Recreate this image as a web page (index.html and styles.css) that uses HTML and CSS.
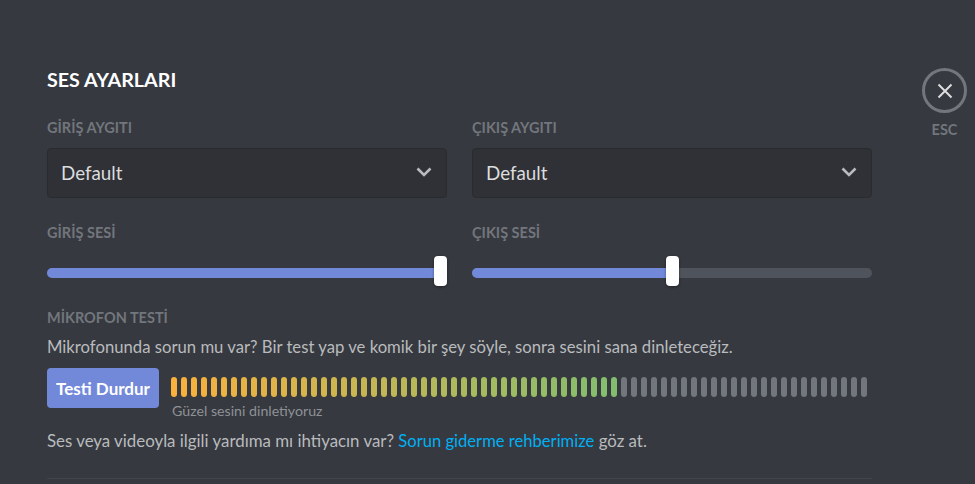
FILE: index.html
```html
<!DOCTYPE html>
<html lang="en">
<head>
    <meta charset="UTF-8">
    <meta name="viewport" content="width=device-width, initial-scale=1.0">
    <title>Ses Ayarları</title>
    <link rel="stylesheet" href="styles.css">
</head>
<body>

    <div class="page">
        <div class="settings">
            <h2 class="title">SES AYARLARI</h2>

            <div class="columns columns-devices">
                <div class="column">
                    <h5 class="label">GİRİŞ AYGITI</h5>
                    <div class="select">
                        <span>Default</span>
                        <svg class="chevron" width="18" height="18" viewBox="0 0 18 18"><path d="M2.5 5.5 L9 12 L15.5 5.5" fill="none" stroke="currentColor" stroke-width="2.6"/></svg>
                    </div>
                </div>
                <div class="column">
                    <h5 class="label">ÇIKIŞ AYGITI</h5>
                    <div class="select">
                        <span>Default</span>
                        <svg class="chevron" width="18" height="18" viewBox="0 0 18 18"><path d="M2.5 5.5 L9 12 L15.5 5.5" fill="none" stroke="currentColor" stroke-width="2.6"/></svg>
                    </div>
                </div>
            </div>

            <div class="columns columns-volume">
                <div class="column">
                    <h5 class="label">GİRİŞ SESİ</h5>
                    <div class="slider">
                        <div class="slider-fill" style="width: 98.25%"></div>
                        <div class="slider-grab" style="left: 98.25%"></div>
                    </div>
                </div>
                <div class="column">
                    <h5 class="label">ÇIKIŞ SESİ</h5>
                    <div class="slider">
                        <div class="slider-fill" style="width: 50%"></div>
                        <div class="slider-grab" style="left: 50%"></div>
                    </div>
                </div>
            </div>

            <h5 class="label label-test">MİKROFON TESTİ</h5>
            <p class="text">Mikrofonunda sorun mu var? Bir test yap ve komik bir şey söyle, sonra sesini sana dinleteceğiz.</p>

            <div class="mic-test">
                <button class="button">Testi Durdur</button>
                <div class="meter-wrap">
                    <div class="meter" id="meter"></div>
                    <div class="meter-note">Güzel sesini dinletiyoruz</div>
                </div>
            </div>

            <p class="text text-help">Ses veya videoyla ilgili yardıma mı ihtiyacın var? <a class="link" href="#">Sorun giderme rehberimize</a> göz at.</p>

            <div class="divider"></div>
        </div>

        <div class="close">
            <div class="close-circle">
                <svg width="18" height="18" viewBox="0 0 18 18"><path d="M2.5 2.5 L15.5 15.5 M15.5 2.5 L2.5 15.5" fill="none" stroke="currentColor" stroke-width="2"/></svg>
            </div>
            <div class="close-text">ESC</div>
        </div>
    </div>

    <script src="meter.js"></script>
</body>
</html>
```

FILE: styles.css
```css
* {
    margin: 0;
    padding: 0;
    box-sizing: border-box;
}

body, html {
    width: 100%;
    height: 100%;
    font-family: 'Lato', 'Open Sans', sans-serif;
    background: #36393f;
    overflow: hidden;
}

.page {
    display: flex;
    align-items: flex-start;
    padding: 68px 0 0 47px;
}

.settings {
    width: 825px;
    flex: none;
}

.title {
    font-size: 19.7px;
    line-height: 24px;
    font-weight: 700;
    color: #fff;
}

.columns {
    display: grid;
    grid-template-columns: 400px 400px;
    gap: 25px;
}

.columns-devices {
    margin-top: 26px;
}

.columns-volume {
    margin-top: 25px;
}

.label {
    font-size: 14.5px;
    line-height: 20px;
    font-weight: 700;
    color: #72767d;
}

.select {
    display: flex;
    align-items: center;
    justify-content: space-between;
    height: 50px;
    margin-top: 10px;
    padding: 0 13px 2px;
    background: #2f3136;
    border: 1px solid #292b2f;
    border-radius: 4px;
    font-size: 18.8px;
    color: #dcddde;
}

.chevron {
    color: #b9bbbe;
}

.slider {
    position: relative;
    height: 10px;
    margin-top: 25px;
    background: #4f545c;
    border-radius: 5px;
}

.slider-fill {
    height: 100%;
    background: #7289da;
    border-radius: 5px;
}

.slider-grab {
    position: absolute;
    top: -12px;
    width: 13px;
    height: 30px;
    margin-left: -6px;
    background: #fff;
    border-radius: 4px;
    box-shadow: 0 1px 3px rgba(0, 0, 0, 0.4);
}

.label-test {
    margin-top: 30px;
}

.text {
    margin-top: 7px;
    font-size: 16.7px;
    line-height: 24px;
    color: #b9bbbe;
}

.mic-test {
    display: flex;
    gap: 12px;
    margin-top: 9px;
}

.button {
    width: 112px;
    height: 40px;
    flex: none;
    border: none;
    border-radius: 4px;
    background: #7289da;
    color: #fff;
    font-family: inherit;
    font-size: 17px;
    font-weight: 700;
}

.meter {
    display: flex;
    gap: 4px;
    height: 20px;
    margin-top: 9px;
}

.meter-bar {
    width: 6px;
    flex: none;
    border-radius: 3px;
    background: #72767d;
}

.meter-note {
    margin: 5px 0 0 1px;
    font-size: 14.2px;
    line-height: 18px;
    color: #8e9297;
}

.text-help {
    margin-top: 9px;
    font-size: 16.85px;
}

.link {
    color: #00b0f4;
    text-decoration: none;
    font-size: 16.6px;
}

.divider {
    height: 1px;
    margin-top: 25px;
    background: #42454b;
}

.close {
    margin-left: 50px;
    width: 45px;
    flex: none;
    display: flex;
    flex-direction: column;
    align-items: center;
}

.close-circle {
    width: 45px;
    height: 45px;
    display: flex;
    align-items: center;
    justify-content: center;
    border: 3px solid #72767d;
    border-radius: 50%;
    color: #dcddde;
}

.close-text {
    margin-top: 8px;
    font-size: 14.5px;
    line-height: 18px;
    font-weight: 700;
    color: #72767d;
}
```

FILE: meter.js
```js
// 70 bars, the first 45 are lit and go from orange to green
const meter = document.getElementById('meter');
const from = [250, 176, 60];
const to = [130, 190, 110];

for (let i = 0; i < 70; i++) {
    const bar = document.createElement('div');
    bar.className = 'meter-bar';
    if (i < 45) {
        const t = i / 44;
        const rgb = from.map((c, n) => Math.round(c + (to[n] - c) * t));
        bar.style.background = `rgb(${rgb.join(',')})`;
    }
    meter.appendChild(bar);
}
```
